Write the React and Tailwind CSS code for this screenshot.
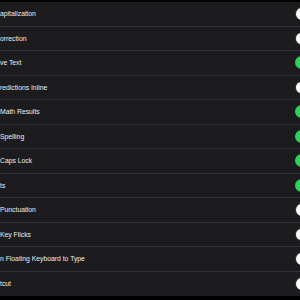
import React from 'react';

const rows = [
  { label: 'apitalization', on: false },
  { label: 'orrection', on: false },
  { label: 've Text', on: true },
  { label: 'redictions Inline', on: false },
  { label: 'Math Results', on: true },
  { label: 'Spelling', on: true },
  { label: 'Caps Lock', on: true },
  { label: 'ts', on: true },
  { label: 'Punctuation', on: false },
  { label: 'Key Flicks', on: false },
  { label: 'n Floating Keyboard to Type', on: false },
  { label: 'tcut', on: false },
];

const Toggle = ({ on }) => (
  <div
    className={`w-[22px] h-[13px] rounded-full flex items-center px-[1px] shrink-0 -mr-[17px] ${
      on ? 'bg-[#30d158] justify-end' : 'bg-[#39393d] justify-start'
    }`}
  >
    <div className="w-[11.5px] h-[11.5px] rounded-full bg-white" />
  </div>
);

export default function App() {
  return (
    <div className="w-[300px] h-[300px] bg-black overflow-hidden pt-[2px]">
      <div className="bg-[#1c1c1e]">
        {rows.map((row, i) => (
          <div
            key={i}
            className={`h-[24.5px] flex items-center justify-between ${
              i < rows.length - 1 ? 'border-b border-[#323235]' : ''
            }`}
          >
            <span className="text-[6.8px] text-[#ececf0] font-['Liberation_Sans',Arial,sans-serif] whitespace-nowrap pt-[1px]">
              {row.label}
            </span>
            <Toggle on={row.on} />
          </div>
        ))}
      </div>
    </div>
  );
}
